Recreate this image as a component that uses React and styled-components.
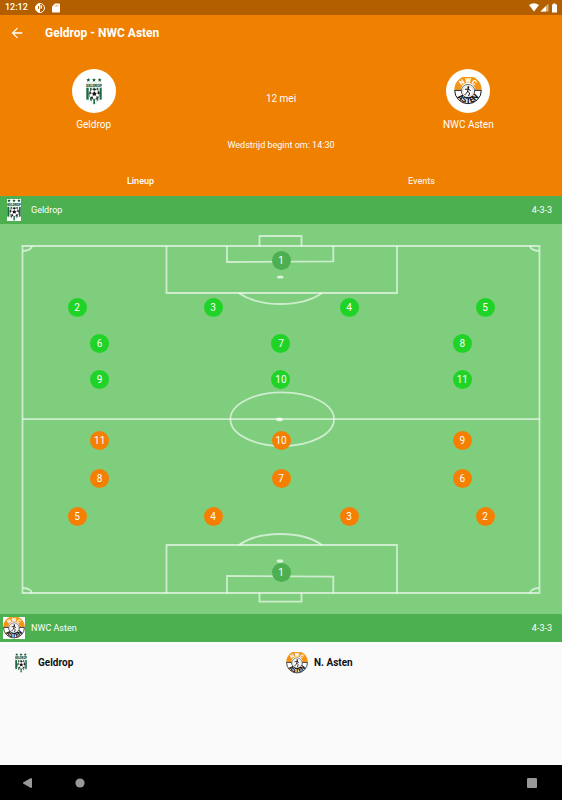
import React, { useState } from "react";
import styled, { createGlobalStyle } from "styled-components";

const GlobalStyle = createGlobalStyle`
  *, *::before, *::after { box-sizing: border-box; }
  body {
    margin: 0;
    background: #fafafa;
    font-family: Roboto, "Liberation Sans", sans-serif;
  }
  button { font: inherit; border: 0; padding: 0; background: none; color: inherit; cursor: pointer; }
  h1, p { margin: 0; font-weight: inherit; }
  svg { display: block; }
`;

const Screen = styled.div`
  min-height: 100vh;
  display: flex;
  flex-direction: column;
`;

const StatusBar = styled.div`
  height: 15px;
  padding: 0 4px 0 5px;
  display: flex;
  align-items: center;
  justify-content: space-between;
  background: #b35f00;
  color: #fff;
  font-size: 9px;
  font-weight: 500;
  line-height: 15px;
`;

const StatusGroup = styled.div`
  display: flex;
  align-items: center;
  gap: ${({ $gap }) => $gap}px;
`;

const Header = styled.header`
  background: #f08000;
  color: #fff;
`;

const AppBar = styled.div`
  height: 36px;
  padding-left: 9px;
  display: flex;
  align-items: center;
  gap: 20px;
`;

const BackButton = styled.button`
  width: 16px;
  height: 16px;
`;

const Title = styled.h1`
  && { font-weight: 700; }
  font-size: 12px;
  line-height: 16px;
`;

const MatchRow = styled.div`
  padding-top: 18px;
  display: grid;
  grid-template-columns: repeat(3, 1fr);
  justify-items: center;
`;

const Team = styled.div`
  display: flex;
  flex-direction: column;
  align-items: center;
  gap: 6px;
  font-size: 10px;
  line-height: 12px;
`;

const Crest = styled.div`
  width: 44px;
  height: 44px;
  border-radius: 50%;
  background: #fff;
  display: grid;
  place-items: center;
`;

const MatchDate = styled.p`
  padding-top: 24px;
  font-size: 10px;
  line-height: 12px;
`;

const Kickoff = styled.p`
  padding: 8px 0 15px;
  text-align: center;
  font-size: 9px;
  line-height: 12px;
`;

const Tabs = styled.div`
  display: grid;
  grid-template-columns: 1fr 1fr;
`;

const Tab = styled.button`
  && {
    font-size: 9px;
    font-weight: 500;
    color: ${({ $active }) => ($active ? "#fff" : "rgba(255, 255, 255, 0.85)")};
  }
  height: 30px;
  line-height: 12px;
`;

const TeamBar = styled.div`
  height: 28px;
  padding: 0 10px 0 3px;
  display: flex;
  align-items: center;
  gap: 6px;
  background: #4caf50;
  color: #fff;
  font-size: 9px;
  line-height: 12px;
`;

const LogoSlot = styled.span`
  width: 22px;
  height: 22px;
  display: flex;
  justify-content: center;
  align-items: center;
`;

const LogoPlate = styled.span`
  background: #fff;
`;

const Formation = styled.span`
  margin-left: auto;
`;

const Pitch = styled.section`
  position: relative;
  background: #7ece7e;
`;

const PitchLines = styled.svg`
  position: absolute;
  inset: 0;
  width: 100%;
  height: 100%;
`;

const Lineups = styled.div`
  position: relative;
  padding: 27px 9px 32px;
  display: flex;
  flex-direction: column;
  gap: 42px;
`;

const Side = styled.div`
  display: flex;
  flex-direction: ${({ $away }) => ($away ? "column-reverse" : "column")};
  gap: ${({ $away }) => ($away ? 37 : 28)}px;
`;

const Field = styled.div`
  display: flex;
  flex-direction: inherit;
  gap: ${({ $away }) => ($away ? 19 : 17)}px;
`;

const Line = styled.div`
  display: flex;
  flex-direction: ${({ $away }) => ($away ? "row-reverse" : "row")};
`;

const Spot = styled.div`
  flex: 1;
  display: flex;
  justify-content: center;
`;

const playerColors = { keeper: "#4caf50", home: "#1fd327", away: "#f57f00" };

const Player = styled.span`
  width: 19px;
  height: 19px;
  border-radius: 50%;
  background: ${({ $kind }) => playerColors[$kind]};
  color: #fff;
  font-size: 10px;
  line-height: 20px;
  text-align: center;
`;

const Bench = styled.section`
  flex: 1;
  padding: 10px;
  display: grid;
  grid-template-columns: 1fr 1fr;
  column-gap: 10px;
  align-content: start;
  color: #111;
  font-size: 10px;
  font-weight: 700;
  line-height: 12px;
`;

const BenchTeam = styled.div`
  display: flex;
  align-items: center;
  gap: 6px;
`;

const NavBar = styled.nav`
  height: 35px;
  padding: 0 22px;
  display: flex;
  align-items: center;
  gap: 34px;
  background: #000;
`;

const NavButton = styled.button`
  width: 16px;
  height: 16px;
  margin-left: ${({ $end }) => ($end ? "auto" : 0)};
`;

function GeldropLogo({ width, height }) {
  const star = "M0-6 1.7-2 6-1.7 2.7 1 3.8 5.2 0 2.9-3.8 5.2-2.7 1-6-1.7-1.7-2Z";
  return (
    <svg width={width} height={height} viewBox="0 0 48 82" preserveAspectRatio="none" aria-hidden="true">
      <g fill="#0c5a30">
        <path d={star} transform="translate(7 6)" />
        <path d={star} transform="translate(24 6)" />
        <path d={star} transform="translate(41 6)" />
      </g>
      <path d="M1 15H47V66Q38 68 24 81Q10 68 1 66Z" fill="#fff" stroke="#a9c9b5" strokeWidth="1" />
      <path d="M1 29H8V66L1 65ZM12 29H17V71L12 67ZM22 29H27V78L24 80 22 78ZM32 29H37V66L32 71ZM41 29H47V65L41 66Z" fill="#1b6a41" />
      <rect x="1" y="15" width="46" height="14" fill="#e3eee7" />
      <text x="24" y="26" textAnchor="middle" fontSize="11" fontWeight="900" fill="#174c30" fontFamily="Roboto, sans-serif">GELDROP</text>
      <circle cx="25" cy="49" r="16" fill="#fff" stroke="#222" strokeWidth="1.5" />
      <g fill="#161616">
        <path d="M25 42 31 46 29 53H21L19 46Z" />
        <path d="M20 34 30 33 28 38 23 38ZM10 44 14 40 15 46 11 52ZM36 39 41 45 39 51 35 46ZM14 57 19 57 22 63 17 63ZM33 57 38 56 33 63 29 63Z" />
      </g>
      <path d="M25 38V43M15 46H20M31 46H36M21 53 18 58M29 53 33 58" stroke="#222" strokeWidth="1.5" />
    </svg>
  );
}

function AstenLogo({ size, id }) {
  return (
    <svg width={size} height={size} viewBox="0 0 84 84" aria-hidden="true">
      <defs>
        <path id={`${id}-top`} d="M17 42A25 25 0 0 1 67 42" />
        <path id={`${id}-bottom`} d="M4 40A38 38 0 0 0 80 40" />
      </defs>
      <circle cx="42" cy="42" r="40" fill="#fff" />
      <path d="M1 38A41 41 0 0 1 83 38H63A21 21 0 0 0 21 38Z" fill="#f39415" />
      <path d="M2 40H22A20 20 0 0 0 62 40H82A40 40 0 0 1 2 40Z" fill="#fff" stroke="#161616" strokeWidth="3" />
      <circle cx="42" cy="42" r="20" fill="#fff" stroke="#333" strokeWidth="2" />
      <circle cx="42" cy="42" r="16" fill="none" stroke="#888" strokeWidth="1" />
      <g fontFamily="Roboto, sans-serif" fontWeight="900" textAnchor="middle">
        <text fontSize="20" fill="#fff">
          <textPath href={`#${id}-top`} startOffset="50%">NWC</textPath>
        </text>
        <text fontSize="24" fill="#161616">
          <textPath href={`#${id}-bottom`} startOffset="50%">ASTEN</textPath>
        </text>
      </g>
      <circle cx="43" cy="31" r="3" fill="#111" />
      <path d="M43 34 41 43 47 48 44 56M41 43 37 49 33 53M34 37 42 36 49 40" fill="none" stroke="#111" strokeWidth="3" strokeLinecap="round" strokeLinejoin="round" />
    </svg>
  );
}

function PitchMarkings() {
  return (
    <PitchLines viewBox="0 0 562 390" preserveAspectRatio="none" aria-hidden="true">
      <g fill="none" stroke="#fff" strokeOpacity="0.62" strokeWidth="1.8">
        <path d="M22.5 22H539.5V369H22.5Z" />
        <path d="M22.5 195.2H539.5" />
        <path d="M166.5 22V69H397V22M227 22V38L333.3 37.4V22M259.5 22V12H301.5V22" />
        <path d="M166.5 369V321H397V369M227 369V352L333.3 352.7V369M259.5 369V377.7H301.5V369" />
        <path d="M239 69A51.5 27 0 0 0 322 69M239 321A51.5 27 0 0 1 322 321" />
        <ellipse cx="282.2" cy="195.2" rx="51.8" ry="26.8" />
        <path d="M32 22Q31 26.5 23 27M530 22Q531 26.5 539 27M23 364Q31 364.5 32 369M539 364Q531 364.5 530 369" />
      </g>
      <g fill="#fff" fillOpacity="0.72">
        <ellipse cx="280.3" cy="53" rx="3.3" ry="1.6" />
        <ellipse cx="279.5" cy="195.4" rx="3.5" ry="1.8" />
        <ellipse cx="280" cy="337" rx="3.3" ry="1.8" />
      </g>
    </PitchLines>
  );
}

const formationLines = [[2, 3, 4, 5], [6, 7, 8], [9, 10, 11]];

function TeamSide({ away = false }) {
  return (
    <Side $away={away}>
      <Line>
        <Spot><Player $kind="keeper">1</Player></Spot>
      </Line>
      <Field $away={away}>
        {formationLines.map((numbers) => (
          <Line key={numbers[0]} $away={away}>
            {numbers.map((n) => (
              <Spot key={n}><Player $kind={away ? "away" : "home"}>{n}</Player></Spot>
            ))}
          </Line>
        ))}
      </Field>
    </Side>
  );
}

export default function App() {
  const [tab, setTab] = useState("Lineup");
  return (
    <Screen>
      <GlobalStyle />
      <StatusBar>
        <StatusGroup $gap={7}>
          <span>12:12</span>
          <svg width="10" height="10" viewBox="0 0 20 20" aria-hidden="true">
            <circle cx="10" cy="10" r="9" fill="none" stroke="#fff" strokeWidth="2" />
            <path d="M10 1A9 9 0 0 0 5 17.5L10 19V11H14V5H10Z" fill="#fff" />
            <path d="M7 6V12M11 7V9" stroke="#b35f00" strokeWidth="2" />
          </svg>
          <svg width="8" height="10" viewBox="0 0 16 20" aria-hidden="true">
            <path d="M6 1H14Q16 1 16 3V17Q16 19 14 19H2Q0 19 0 17V7Z" fill="#fff" />
            <path d="M6 4V7M9 4V7M12 4V7" stroke="#b35f00" strokeWidth="1" />
          </svg>
        </StatusGroup>
        <StatusGroup $gap={1}>
          <svg width="10" height="9" viewBox="0 0 20 18" aria-hidden="true">
            <path d="M0 4Q10-3 20 4L10 17Z" fill="#fff" />
          </svg>
          <svg width="9" height="9" viewBox="0 0 18 18" aria-hidden="true">
            <path d="M17 1V17H1Z" fill="#fff" fillOpacity="0.5" />
            <path d="M12 6V17H1Z" fill="#fff" />
          </svg>
          <svg width="8" height="10" viewBox="0 0 16 20" aria-hidden="true">
            <path d="M6 1H11V3H14V19H4V3H6Z" fill="#fff" />
          </svg>
        </StatusGroup>
      </StatusBar>
      <Header>
        <AppBar>
          <BackButton aria-label="Back">
            <svg width="16" height="16" viewBox="0 0 24 24" aria-hidden="true">
              <path d="M20 11H7.83l5.59-5.59L12 4l-8 8 8 8 1.41-1.41L7.83 13H20v-2z" fill="#fff" />
            </svg>
          </BackButton>
          <Title>Geldrop - NWC Asten</Title>
        </AppBar>
        <MatchRow>
          <Team>
            <Crest><GeldropLogo width={16} height={27} /></Crest>
            <span>Geldrop</span>
          </Team>
          <MatchDate>12 mei</MatchDate>
          <Team>
            <Crest><AstenLogo size={28} id="crest" /></Crest>
            <span>NWC Asten</span>
          </Team>
        </MatchRow>
        <Kickoff>Wedstrijd begint om: 14:30</Kickoff>
        <Tabs role="tablist">
          {["Lineup", "Events"].map((name) => (
            <Tab key={name} role="tab" aria-selected={tab === name} $active={tab === name} onClick={() => setTab(name)}>
              {name}
            </Tab>
          ))}
        </Tabs>
      </Header>
      <TeamBar>
        <LogoSlot><LogoPlate><GeldropLogo width={14} height={22} /></LogoPlate></LogoSlot>
        <span>Geldrop</span>
        <Formation>4-3-3</Formation>
      </TeamBar>
      <Pitch>
        <PitchMarkings />
        <Lineups>
          <TeamSide />
          <TeamSide away />
        </Lineups>
      </Pitch>
      <TeamBar>
        <LogoSlot><LogoPlate><AstenLogo size={22} id="bar" /></LogoPlate></LogoSlot>
        <span>NWC Asten</span>
        <Formation>4-3-3</Formation>
      </TeamBar>
      <Bench>
        <BenchTeam>
          <LogoSlot><GeldropLogo width={12} height={20} /></LogoSlot>
          <span>Geldrop</span>
        </BenchTeam>
        <BenchTeam>
          <LogoSlot><AstenLogo size={22} id="bench" /></LogoSlot>
          <span>N. Asten</span>
        </BenchTeam>
      </Bench>
      <NavBar>
        <NavButton aria-label="Back">
          <svg width="16" height="16" viewBox="0 0 16 16" aria-hidden="true">
            <path d="M2 8 9 4V12Z" fill="#999" stroke="#999" strokeWidth="2" strokeLinejoin="round" />
          </svg>
        </NavButton>
        <NavButton aria-label="Home">
          <svg width="16" height="16" viewBox="0 0 16 16" aria-hidden="true">
            <circle cx="8" cy="8" r="4.6" fill="#999" />
          </svg>
        </NavButton>
        <NavButton $end aria-label="Recent apps">
          <svg width="16" height="16" viewBox="0 0 16 16" aria-hidden="true">
            <rect x="3" y="3" width="10" height="10" rx="1" fill="#999" />
          </svg>
        </NavButton>
      </NavBar>
    </Screen>
  );
}
